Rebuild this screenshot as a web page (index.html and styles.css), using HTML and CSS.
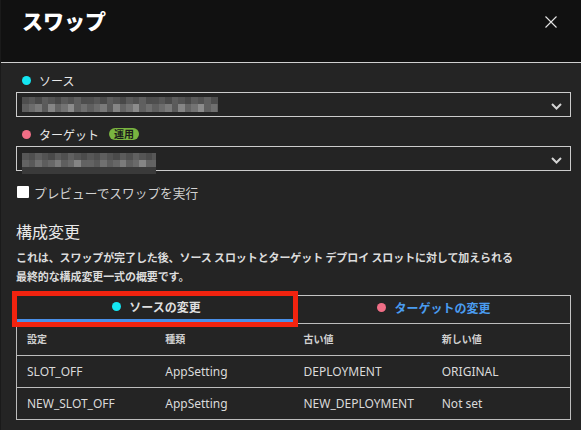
FILE: index.html
```html
<!DOCTYPE html>
<html lang="ja">
<head>
<meta charset="utf-8">
<title>スワップ</title>
<link rel="stylesheet" href="styles.css">
</head>
<body>
<div class="panel">
  <header class="head">
    <h1 class="title">スワップ</h1>
    <button class="close" aria-label="閉じる">
      <svg width="12" height="12" viewBox="0 0 12 12"><path d="M0.5 0.5L11.5 11.5M11.5 0.5L0.5 11.5" stroke="#e6e6e6" stroke-width="1.1" fill="none"/></svg>
    </button>
  </header>
  <section class="content">
    <div class="label"><span class="dot dot-src"></span>ソース</div>
    <div class="select">
      <span class="mosaic mosaic-a"></span>
      <svg class="chev" width="11" height="7" viewBox="0 0 11 7"><path d="M1 1L5.5 5.5L10 1" stroke="#d4d4d4" stroke-width="2" fill="none"/></svg>
    </div>
    <div class="label label-tgt"><span class="dot dot-tgt"></span>ターゲット<span class="badge">運用</span></div>
    <div class="select">
      <span class="mosaic mosaic-b"></span>
      <svg class="chev" width="11" height="7" viewBox="0 0 11 7"><path d="M1 1L5.5 5.5L10 1" stroke="#d4d4d4" stroke-width="2" fill="none"/></svg>
    </div>
    <label class="check"><span class="box"></span>プレビューでスワップを実行</label>
    <h2 class="heading">構成変更</h2>
    <p class="desc">これは、スワップが完了した後、ソース スロットとターゲット デプロイ スロットに対して加えられる最終的な構成変更一式の概要です。</p>
    <div class="tabs">
      <div class="tab tab-active"><span class="dot dot-src"></span>ソースの変更</div>
      <div class="tab tab-other"><span class="dot dot-tgt"></span>ターゲットの変更</div>
      <div class="highlight"></div>
    </div>
    <div class="grid">
      <div class="row row-head">
        <div class="cell">設定</div><div class="cell">種類</div><div class="cell">古い値</div><div class="cell">新しい値</div>
      </div>
      <div class="row">
        <div class="cell">SLOT_OFF</div><div class="cell">AppSetting</div><div class="cell">DEPLOYMENT</div><div class="cell">ORIGINAL</div>
      </div>
      <div class="row row-last">
        <div class="cell">NEW_SLOT_OFF</div><div class="cell">AppSetting</div><div class="cell">NEW_DEPLOYMENT</div><div class="cell">Not set</div>
      </div>
    </div>
  </section>
</div>
</body>
</html>
```
FILE: styles.css
```css
* { box-sizing: border-box; }
html, body { margin: 0; padding: 0; }
body {
  width: 581px;
  height: 430px;
  overflow: hidden;
  background: #242424;
  font-family: "Noto Sans CJK JP", "Noto Sans", sans-serif;
  color: #e6e6e6;
}
.panel {
  width: 581px;
  height: 430px;
  background: #242424;
  border-left: 1px solid #1a1a1a;
}
.head {
  height: 63px;
  background: #111111;
  border-bottom: 1px solid #cfcfcf;
  display: flex;
  justify-content: space-between;
  align-items: flex-start;
  padding: 6px 24px 0 21px;
}
.title {
  margin: 0;
  font-size: 21px;
  line-height: 28px;
  font-weight: 900;
  color: #ffffff;
}
.close {
  background: none;
  border: none;
  padding: 0;
  margin-top: 10px;
  width: 12px;
  height: 12px;
  display: block;
}
.close svg { display: block; }
.content {
  padding: 8px 10px 0 15px;
}
.label {
  display: flex;
  align-items: center;
  height: 18px;
  font-size: 12px;
  color: #e8e8e8;
  margin-bottom: 3px;
}
.label-tgt { margin-top: 8px; }
.dot {
  width: 9px;
  height: 9px;
  border-radius: 50%;
  display: inline-block;
  flex: none;
}
.label .dot { margin: 0 8px 0 6px; }
.dot-src { background: #14e6f2; }
.dot-tgt { background: #f06e86; }
.badge {
  margin-left: 10px;
  height: 12px;
  line-height: 12px;
  padding: 0 5px;
  border-radius: 6px;
  background: #79b440;
  color: #1b1b1b;
  font-size: 10px;
  font-weight: 700;
}
.select {
  height: 25px;
  border: 1px solid #cccccc;
  display: flex;
  align-items: flex-start;
  padding: 0 8px 0 5px;
}
.chev {
  margin-left: auto;
  margin-top: 10px;
  display: block;
}
.mosaic { display: block; }
.mosaic-a {
  margin-top: 4px;
  width: 196px;
  height: 15px;
  background:
    repeating-linear-gradient(90deg, #4e4e4e 0 7px, #575757 7px 13px, #4a4a4a 13px 20px, #5c5c5c 20px 26px, #535353 26px 33px, #484848 33px 39px, #5a5a5a 39px 46px, #515151 46px 52px, #5f5f5f 52px 59px, #4d4d4d 59px 65px) 0 0 / 100% 7px no-repeat,
    repeating-linear-gradient(90deg, #5f5f5f 0 7px, #6c6c6c 7px 13px, #7a7a7a 13px 20px, #5a5a5a 20px 26px, #858585 26px 33px, #646464 33px 39px, #737373 39px 46px, #8c8c8c 46px 52px, #606060 52px 59px, #6f6f6f 59px 65px) 0 7px / 100% 8px no-repeat;
}
.mosaic-b {
  margin-top: 6px;
  width: 134px;
  height: 21px;
  background:
    repeating-linear-gradient(90deg, #575757 0 7px, #4f4f4f 7px 13px, #5e5e5e 13px 20px, #535353 20px 26px, #4a4a4a 26px 33px, #5b5b5b 33px 39px, #505050 39px 46px, #606060 46px 52px, #555555 52px 59px, #4c4c4c 59px 65px) 0 0 / 100% 7px no-repeat,
    repeating-linear-gradient(90deg, #636363 0 7px, #595959 7px 13px, #707070 13px 20px, #5d5d5d 20px 26px, #676767 26px 33px, #7b7b7b 33px 39px, #5f5f5f 39px 46px, #6a6a6a 46px 52px, #858585 52px 59px, #626262 59px 65px) 0 7px / 100% 7px no-repeat,
    linear-gradient(#3a3a3a, #3a3a3a) 0 14px / 100% 7px no-repeat;
}
.check {
  display: flex;
  align-items: center;
  height: 18px;
  margin-top: 12px;
  font-size: 12.7px;
  color: #d2d2d2;
}
.box {
  width: 12px;
  height: 12px;
  background: #ffffff;
  border-radius: 1px;
  margin: 0 5px 0 1px;
  flex: none;
}
.heading {
  margin: 19px 0 0 0;
  font-size: 16px;
  line-height: 22px;
  font-weight: 400;
  color: #e8e8e8;
}
.desc {
  margin: 6px 0 0 0;
  font-size: 11px;
  line-height: 19px;
  font-weight: 700;
  color: #dcdcdc;
  letter-spacing: -0.1px;
  padding-right: 52px;
}
.tabs {
  position: relative;
  margin-top: 9px;
  display: grid;
  grid-template-columns: 281px 1fr;
  height: 28px;
}
.tab {
  display: flex;
  align-items: center;
  justify-content: center;
  font-size: 12px;
  font-weight: 700;
  padding-bottom: 5px;
}
.tab .dot { margin-right: 8px; }
.tab-active {
  color: #dedede;
  border-bottom: 4px solid #4a8fe8;
  padding-bottom: 1px;
}
.tab-other {
  color: #4a9cf0;
  border: 1px solid #c4c4c4;
  border-bottom: none;
}
.highlight {
  position: absolute;
  left: -4px;
  top: -4px;
  width: 286px;
  height: 36px;
  border: 5px solid #f2230f;
}
.grid {
  border: 1px solid #bdbdbd;
}
.row {
  display: grid;
  grid-template-columns: repeat(4, 1fr);
  height: 32px;
  border-bottom: 1px solid #bdbdbd;
  align-items: center;
  font-family: "Noto Sans", "Noto Sans CJK JP", sans-serif;
  font-size: 12px;
  color: #dadada;
}
.row-last { border-bottom: none; height: 31px; }
.row-head {
  font-family: "Noto Sans CJK JP", sans-serif;
  font-size: 10px;
  font-weight: 700;
  color: #d0d0d0;
  padding-bottom: 2px;
}
.cell { padding-left: 10px; }
```
